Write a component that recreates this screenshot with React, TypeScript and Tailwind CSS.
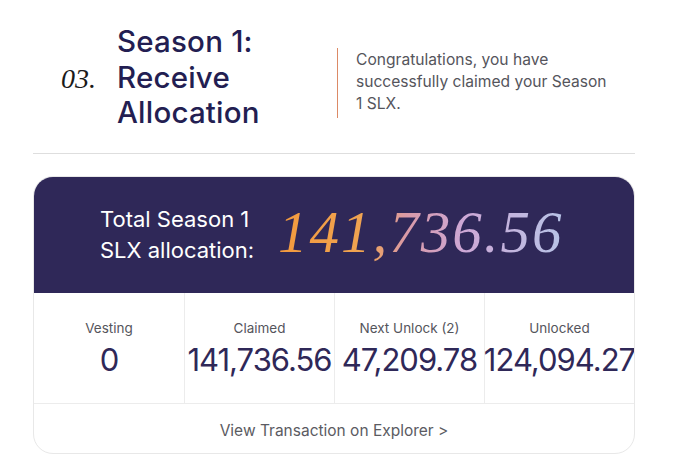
import React from "react";

const stats = [
  { label: "Vesting", value: "0" },
  { label: "Claimed", value: "141,736.56" },
  { label: "Next Unlock (2)", value: "47,209.78" },
  { label: "Unlocked", value: "124,094.27" },
];

export default function App() {
  return (
    <div
      className="w-[680px] h-[468px] bg-white overflow-hidden"
      style={{ fontFamily: "Inter, 'Noto Sans', sans-serif" }}
    >
      <div className="ml-[33px] w-[602px]">
        <div className="flex items-center h-[154px] border-b border-[#dedede]">
          <div
            className="w-[84px] pl-[28px] text-[28px] italic text-[#1a1a1a] pt-[4px]"
            style={{ fontFamily: "'Liberation Serif', serif" }}
          >
            03.
          </div>
          <div className="w-[220px] text-[29.5px] leading-[35.5px] text-[#231e52] font-medium tracking-[0.2px] mt-[2px]">
            Season 1:
            <br />
            Receive
            <br />
            Allocation
          </div>
          <div className="flex h-[70px] border-l-[1.5px] border-[#dc8a66] pl-[18px] items-center mt-[12px]">
            <p className="text-[15.6px] leading-[22px] text-[#55555c] w-[255px] -mt-[2px]">
              Congratulations, you have successfully claimed your Season 1 SLX.
            </p>
          </div>
        </div>

        <div className="mt-[22px] rounded-[20px] border border-[#e8e8e8] overflow-hidden">
          <div className="bg-[#2f2858] h-[117px] flex items-center pl-[67px] -mx-px -mt-px">
            <div className="text-white text-[22px] leading-[31px] w-[178px]">
              Total Season 1
              <br />
              SLX allocation:
            </div>
            <div
              className="text-[59px] italic bg-clip-text text-transparent leading-none tracking-[2px] pb-[4px]"
              style={{
                fontFamily: "'Liberation Serif', serif",
                backgroundImage:
                  "linear-gradient(90deg, #f39a3d 0%, #f0a452 30%, #d99aa8 45%, #cda8d6 65%, #b7c3e6 100%)",
                WebkitBackgroundClip: "text",
              }}
            >
              141,736.56
            </div>
          </div>
          <div className="grid grid-cols-4 h-[111px] border-b border-[#ececec]">
            {stats.map((s, i) => (
              <div
                key={s.label}
                className={`flex flex-col items-center justify-center ${
                  i > 0 ? "border-l border-[#ececec]" : ""
                }`}
              >
                <div className="text-[13.5px] text-[#55555c] leading-[18px]">{s.label}</div>
                <div className="text-[31px] text-[#2f2858] leading-[36px] tracking-[-1px] whitespace-nowrap mt-[5px]">
                  {s.value}
                </div>
              </div>
            ))}
          </div>
          <div className="h-[49px] flex items-center justify-center text-[15.5px] text-[#5b5b62] pt-[4px]">
            View Transaction on Explorer &gt;
          </div>
        </div>
      </div>
    </div>
  );
}
